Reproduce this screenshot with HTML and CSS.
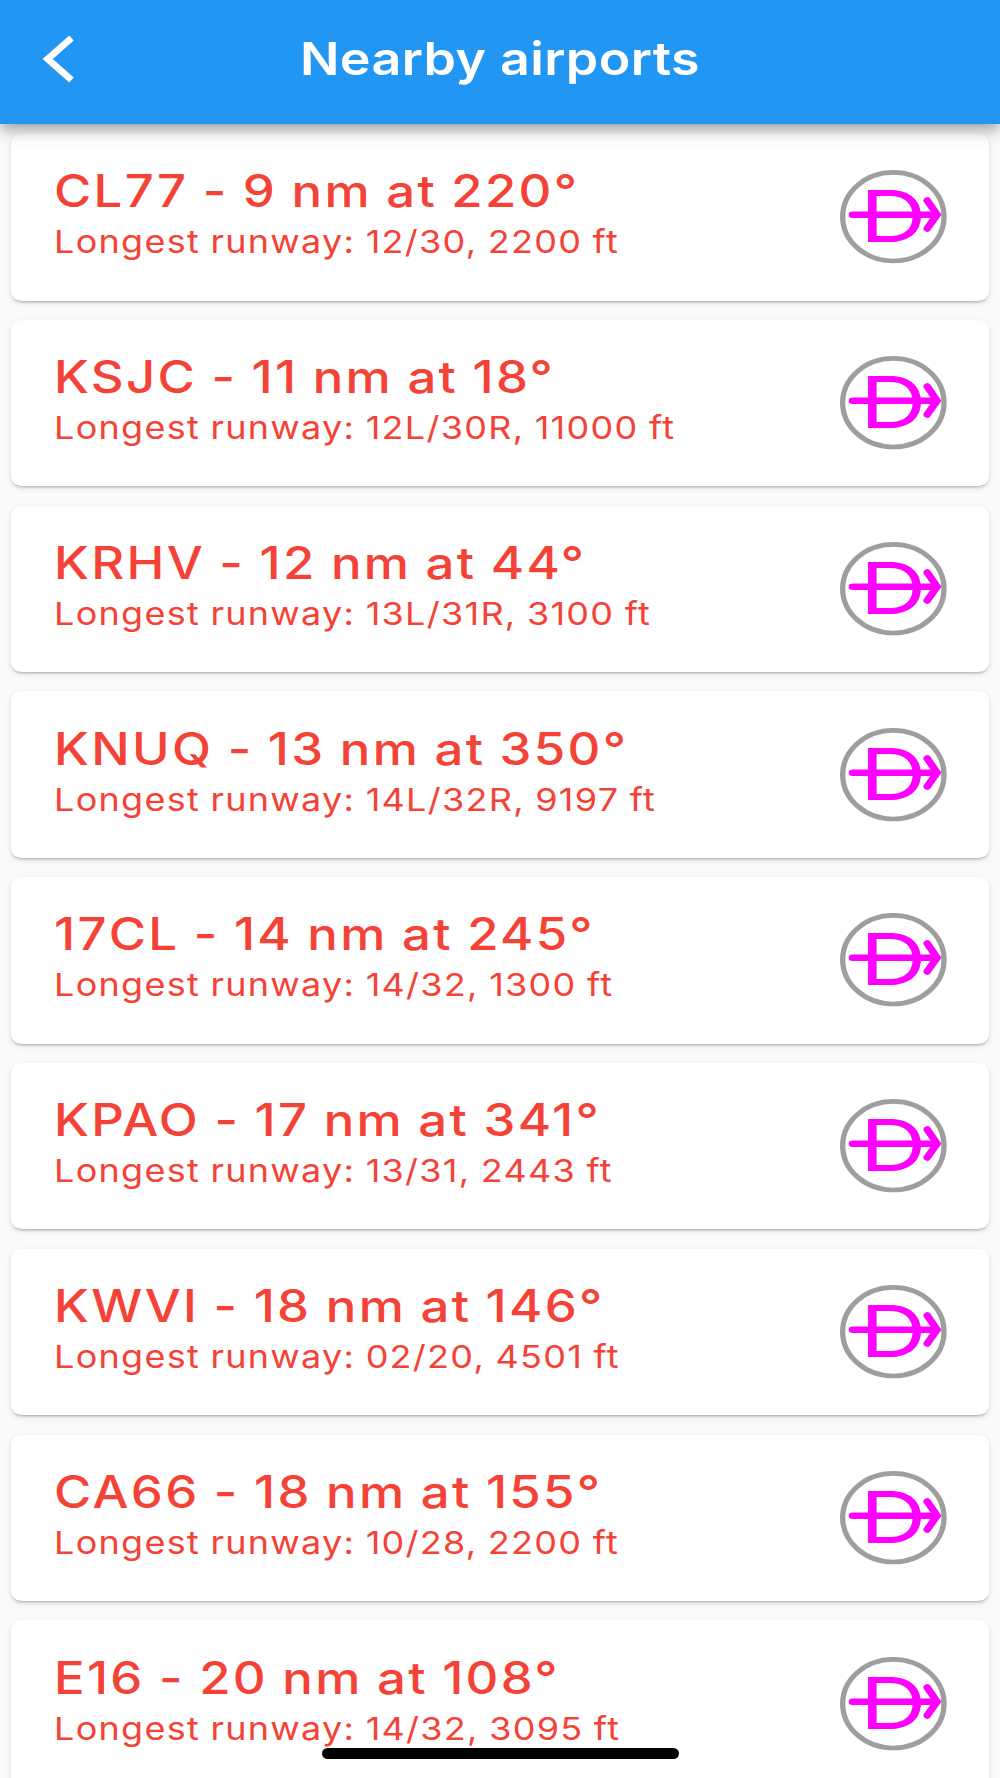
FILE: index.html
```html
<!DOCTYPE html>
<html lang="en">
<head>
    <meta charset="UTF-8">
    <meta name="viewport" content="width=device-width, initial-scale=1.0">
    <title>Nearby airports</title>
    <link rel="stylesheet" href="styles.css">
</head>
<body>
    <header class="app-bar">
        <svg class="back" viewBox="0 0 40 52" aria-label="Back">
            <path d="M33.5 5 L9.7 26 L33.5 47"/>
        </svg>
        <h1>Nearby airports</h1>
    </header>

    <main class="list" id="list"></main>
    <div class="home-indicator"></div>

    <script>
        const airports = [
            { id: 'CL77', distance: 9, bearing: 220, runway: '12/30', length: 2200 },
            { id: 'KSJC', distance: 11, bearing: 18, runway: '12L/30R', length: 11000 },
            { id: 'KRHV', distance: 12, bearing: 44, runway: '13L/31R', length: 3100 },
            { id: 'KNUQ', distance: 13, bearing: 350, runway: '14L/32R', length: 9197 },
            { id: '17CL', distance: 14, bearing: 245, runway: '14/32', length: 1300 },
            { id: 'KPAO', distance: 17, bearing: 341, runway: '13/31', length: 2443 },
            { id: 'KWVI', distance: 18, bearing: 146, runway: '02/20', length: 4501 },
            { id: 'CA66', distance: 18, bearing: 155, runway: '10/28', length: 2200 },
            { id: 'E16', distance: 20, bearing: 108, runway: '14/32', length: 3095 }
        ];

        // Direct-to button: a D with an arrow through it
        const directTo = `
            <svg class="direct-to" viewBox="0 0 40 40" preserveAspectRatio="none">
                <circle cx="20" cy="20" r="19"/>
                <text transform="translate(7.5 31) scale(1.12 1)">D</text>
                <path class="shaft" d="M4.7 19.15 H36"/>
                <path class="head" d="M32.7 13.1 L36.4 19.15 L32.7 25.1"/>
            </svg>`;

        document.getElementById('list').innerHTML = airports.map(a => `
            <div class="card">
                <div class="info">
                    <div class="name">${a.id} - ${a.distance} nm at ${a.bearing}°</div>
                    <div class="runway">Longest runway: ${a.runway}, ${a.length} ft</div>
                </div>
                ${directTo}
            </div>`).join('');
    </script>
</body>
</html>
```
FILE: styles.css
```css
* {
    box-sizing: border-box;
}
body {
    margin: 0;
    height: 1778px;
    overflow: hidden;
    font-family: Inter, "Liberation Sans", sans-serif;
    background-color: #fafafa;
}
.app-bar {
    position: relative;
    z-index: 1;
    display: grid;
    grid-template-columns: 118px 1fr 118px;
    align-items: center;
    height: 124px;
    padding-bottom: 6px;
    background-color: #2196f3;
    box-shadow: 0 5px 10px -3px rgba(0, 0, 0, 0.2), 0 9px 12px 0 rgba(0, 0, 0, 0.14), 0 2px 24px 0 rgba(0, 0, 0, 0.12);
}
.back {
    width: 40px;
    height: 52px;
    margin-left: 38px;
    fill: none;
    stroke: #fff;
    stroke-width: 6.8;
}
h1 {
    margin: 0;
    color: #fff;
    font-size: 45.5px;
    font-weight: 600;
    line-height: 56px;
    letter-spacing: 0.35px;
    text-align: center;
    white-space: nowrap;
    transform: scaleX(1.143);
}
.list {
    display: flex;
    flex-direction: column;
    gap: 19.3px;
    padding: 10px 11px;
}
.card {
    display: flex;
    flex-shrink: 0;
    justify-content: space-between;
    height: 166.5px;
    padding: 36.3px 42.5px 0 43px;
    border-radius: 10.7px / 9.3px;
    background-color: #fff;
    box-shadow: 0 3px 2px -2px rgba(0, 0, 0, 0.16), 0 2px 3px 0 rgba(0, 0, 0, 0.1), 0 2px 7px 0 rgba(0, 0, 0, 0.08);
}
.info {
    color: #f44336;
    white-space: nowrap;
    transform: scaleX(1.143);
    transform-origin: left;
}
.name {
    font-size: 44.5px;
    font-weight: 500;
    line-height: 54px;
    letter-spacing: 2px;
    word-spacing: -1.3px;
    margin-top: -6px;
}
.runway {
    font-size: 31.5px;
    line-height: 38px;
    letter-spacing: 1.12px;
    word-spacing: -0.9px;
    margin-top: 5px;
}
.direct-to {
    width: 106.7px;
    height: 93.3px;
    overflow: visible;
    fill: none;
}
.direct-to circle {
    stroke: #9e9e9e;
    stroke-width: 2;
}
.direct-to text {
    fill: #f0f;
    font-size: 30.8px;
}
.direct-to .shaft,
.direct-to .head {
    stroke: #f0f;
    stroke-width: 2.8;
    stroke-linecap: round;
}
.home-indicator {
    position: fixed;
    z-index: 2;
    left: 322px;
    bottom: 19px;
    width: 357px;
    height: 11.3px;
    border-radius: 6px;
    background-color: #000;
}
```
